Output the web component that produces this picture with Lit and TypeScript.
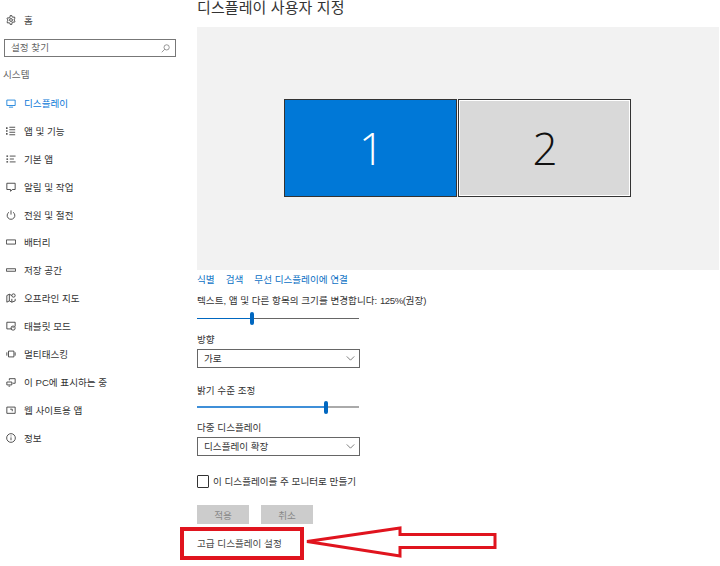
import { LitElement, html, css, svg } from "lit";
import { customElement } from "lit/decorators.js";

const ic = (body: unknown) => html`<svg class="ic" viewBox="0 0 12 12" fill="none" stroke="currentColor" stroke-width="1">${body}</svg>`;

const icons = {
  gear: svg`<circle cx="6" cy="6" r="1.700"/><path d="M5 .7h2l.3 1.500 1.200.6 1.400-.6 1 1.700-1.100 1 0 1.300 1.100 1-1 1.700-1.400-.6-1.200.6L7 11.300H5l-.3-1.500-1.200-.6-1.400.6-1-1.700 1.100-1 0-1.300-1.100-1 1-1.700 1.400.6 1.200-.6z"/>`,
  display: svg`<path d="M1 2.500h10v6.500H1zM3.500 11h5"/>`,
  apps: svg`<path d="M1 1.500v2M1 5v2M1 8.500v2" stroke-width="1.600"/><path d="M4 1.500h7M4 4.500h7M4 7.500h7M4 10.500h7"/>`,
  defaults: svg`<path d="M0.500 2.500h2M0.500 6h2M0.500 9.500h2" stroke-width="1.500"/><path d="M4.500 2.500h7M4.500 6h5M4.500 9.500h7"/>`,
  notify: svg`<path d="M1 1.500h10v7.500H7.500L5.500 11.200V9H1z"/>`,
  power: svg`<path d="M3.500 2.700a4.600 4.600 0 1 0 5 0M6 .5v5"/>`,
  battery: svg`<path d="M.5 3.500h11v5H.5z"/>`,
  storage: svg`<path d="M.5 4.500h11v3H.5z"/>`,
  map: svg`<path d="M7 3L4 1.500 1 3v8l3-1.500 3 1.500 4-1.500V7M4 1.500v8M7 7v4"/><circle cx="9" cy="3" r="2"/>`,
  tablet: svg`<path d="M7 9.500H1V1.500h10v5"/><circle cx="8.500" cy="8.500" r="2.500"/><path d="M8.500 7v1.500"/>`,
  multitask: svg`<path d="M3 2.500h6.500v7H3zM1 4v4M11 4v4"/>`,
  project: svg`<path d="M4 4V2h7v5.500H8M1 6h6v3.500H1zM3 11h2"/>`,
  web: svg`<path d="M1 2.500h10v7.500H1zM5 5h2.500v2.500"/>`,
  info: svg`<circle cx="6" cy="6" r="5.200"/><path d="M6 5.200v3.500M6 3v1.100"/>`,
};

const nav: [keyof typeof icons, string][] = [
  ["display", "디스플레이"],
  ["apps", "앱 및 기능"],
  ["defaults", "기본 앱"],
  ["notify", "알림 및 작업"],
  ["power", "전원 및 절전"],
  ["battery", "배터리"],
  ["storage", "저장 공간"],
  ["map", "오프라인 지도"],
  ["tablet", "태블릿 모드"],
  ["multitask", "멀티태스킹"],
  ["project", "이 PC에 표시하는 중"],
  ["web", "웹 사이트용 앱"],
  ["info", "정보"],
];

const chevron = html`<svg class="chev" viewBox="0 0 10 6" fill="none" stroke="#666" stroke-width="1"><path d="M.5.5L5 5 9.500.5"/></svg>`;

@customElement("app-root")
export class AppRoot extends LitElement {
  static styles = css`
    :host {
      display: flex;
      width: 720px;
      height: 566px;
      overflow: hidden;
      position: relative;
      background: #fff;
      color: #222;
      font-family: "Liberation Sans", "Noto Sans CJK KR", sans-serif;
      font-size: 9.6px;
      line-height: 14px;
    }
    .side { width: 197px; flex: none; display: flex; flex-direction: column; }
    .row {
      height: 27.9px;
      flex: none;
      display: flex;
      align-items: center;
      gap: 8px;
      padding-left: 6px;
      box-sizing: border-box;
      color: #333;
    }
    .row span { padding-top: 2px; }
    .home { margin-top: 6px; height: 28px; }
    .ic { width: 10px; height: 10px; flex: none; }
    .row.on { color: #0a78d8; }
    .search {
      margin: 5px 0 0 4px;
      width: 172px;
      height: 18px;
      box-sizing: border-box;
      border: 1px solid #777;
      display: flex;
      align-items: center;
      justify-content: space-between;
      padding: 0 5px 0 6px;
      color: #666;
    }
    .search svg { width: 9px; height: 9px; }
    .group { margin-top: 4px; height: 28px; display: flex; align-items: center; padding-left: 3px; color: #666; }
    .main { flex: 1; display: flex; flex-direction: column; min-width: 0; }
    h1 {
      margin: 0;
      font-weight: 400;
      font-size: 15px;
      letter-spacing: 0.1px;
      line-height: 16px;
      height: 16px;
      color: #333;
    }
    .stage {
      margin: 11px 1px 0 0;
      height: 243px;
      background: #f2f2f2;
      display: flex;
      justify-content: center;
      gap: 1px;
      padding: 72px 1px 0 0;
      box-sizing: border-box;
    }
    .mon {
      width: 173px;
      height: 98px;
      box-sizing: border-box;
      border: 1px solid #333;
      display: flex;
      align-items: center;
      justify-content: center;
      font-family: "Open Sans", "Noto Sans", sans-serif;
      font-weight: 300;
      font-size: 44px;
      line-height: 1;
    }
    .mon.a { background: #0078d7; color: #fff; padding-left: 2px; }
    .mon.b { background: #d9d9d9; color: #111; box-shadow: inset 0 0 0 1px #fff; padding-left: 1px; }
    .links { margin-top: 2px; height: 14px; box-sizing: border-box; padding-top: 1px; display: flex; gap: 11px; color: #0a6fc4; }
    .label { height: 14px; box-sizing: border-box; padding-top: 1px; color: #333; }
    .num { letter-spacing: -0.4px; }
    .slider { width: 162px; height: 14px; display: flex; align-items: center; position: relative; }
    .track { height: 1px; background: #666; flex: 1; }
    .fill { height: 1px; background: #0067c0; flex: none; }
    .thumb { width: 4px; height: 13px; border-radius: 2px; background: #0067c0; flex: none; }
    .b2 .track { background: #aaa; height: 2px; }
    .b2 .fill { background: #3f8fd8; height: 2px; }
    .select {
      width: 163px;
      height: 19px;
      box-sizing: border-box;
      border: 1px solid #666;
      display: flex;
      align-items: center;
      justify-content: space-between;
      padding: 0 4px 0 6px;
      color: #333;
    }
    .chev { width: 9px; height: 5px; }
    .check { margin-top: 18px; height: 14px; display: flex; align-items: center; gap: 4px; color: #333; }
    .check span { padding-top: 2px; }
    .box { width: 12px; height: 13px; box-sizing: border-box; border: 1.500px solid #333; border-radius: 1px; flex: none; }
    .btns { margin-top: 17px; display: flex; gap: 12px; }
    .btn { width: 52px; height: 19px; box-sizing: border-box; padding-top: 2px; background: #ccc; color: #888; display: flex; align-items: center; justify-content: center; }
    .adv { margin-top: 13px; height: 14px; color: #444; }
    .note { position: absolute; left: 0; top: 0; width: 720px; height: 566px; pointer-events: none; }
  `;

  render() {
    return html`
      <div class="side">
        <div class="row home">${ic(icons.gear)}<span>홈</span></div>
        <div class="search">
          <span>설정 찾기</span>
          <svg viewBox="0 0 12 12" fill="none" stroke="#777" stroke-width="1"><circle cx="7.500" cy="4.500" r="3.500"/><path d="M5 7L1 11"/></svg>
        </div>
        <div class="group">시스템</div>
        ${nav.map(([k, t], i) => html`<div class="row ${i === 0 ? "on" : ""}">${ic(icons[k])}<span>${t}</span></div>`)}
      </div>
      <div class="main">
        <h1>디스플레이 사용자 지정</h1>
        <div class="stage">
          <div class="mon a">1</div>
          <div class="mon b">2</div>
        </div>
        <div class="links"><span>식별</span><span>검색</span><span>무선 디스플레이에 연결</span></div>
        <div class="label" style="margin-top:7px">텍스트, 앱 및 다른 항목의 크기를 변경합니다: <span class="num">125%(</span>권장<span class="num">)</span></div>
        <div class="slider" style="margin-top:4px">
          <div class="fill" style="width:53px"></div><div class="thumb"></div><div class="track"></div>
        </div>
        <div class="label" style="margin-top:7px">방향</div>
        <div class="select" style="margin-top:3px"><span>가로</span>${chevron}</div>
        <div class="label" style="margin-top:15px">밝기 수준 조정</div>
        <div class="slider b2" style="margin-top:3px">
          <div class="fill" style="width:127px"></div><div class="thumb"></div><div class="track"></div>
        </div>
        <div class="label" style="margin-top:6px">다중 디스플레이</div>
        <div class="select" style="margin-top:3px"><span>디스플레이 확장</span>${chevron}</div>
        <div class="check"><div class="box"></div><span>이 디스플레이를 주 모니터로 만들기</span></div>
        <div class="btns"><div class="btn">적용</div><div class="btn">취소</div></div>
        <div class="adv">고급 디스플레이 설정</div>
      </div>
      <svg class="note" viewBox="0 0 720 566" fill="none" stroke="#e0141e">
        <rect x="182" y="529" width="120" height="29" stroke-width="4"/>
        <path d="M307 541.500L400 528V534.500H495V547.500H400V556z" fill="#fff" stroke-width="3"/>
      </svg>
    `;
  }
}
